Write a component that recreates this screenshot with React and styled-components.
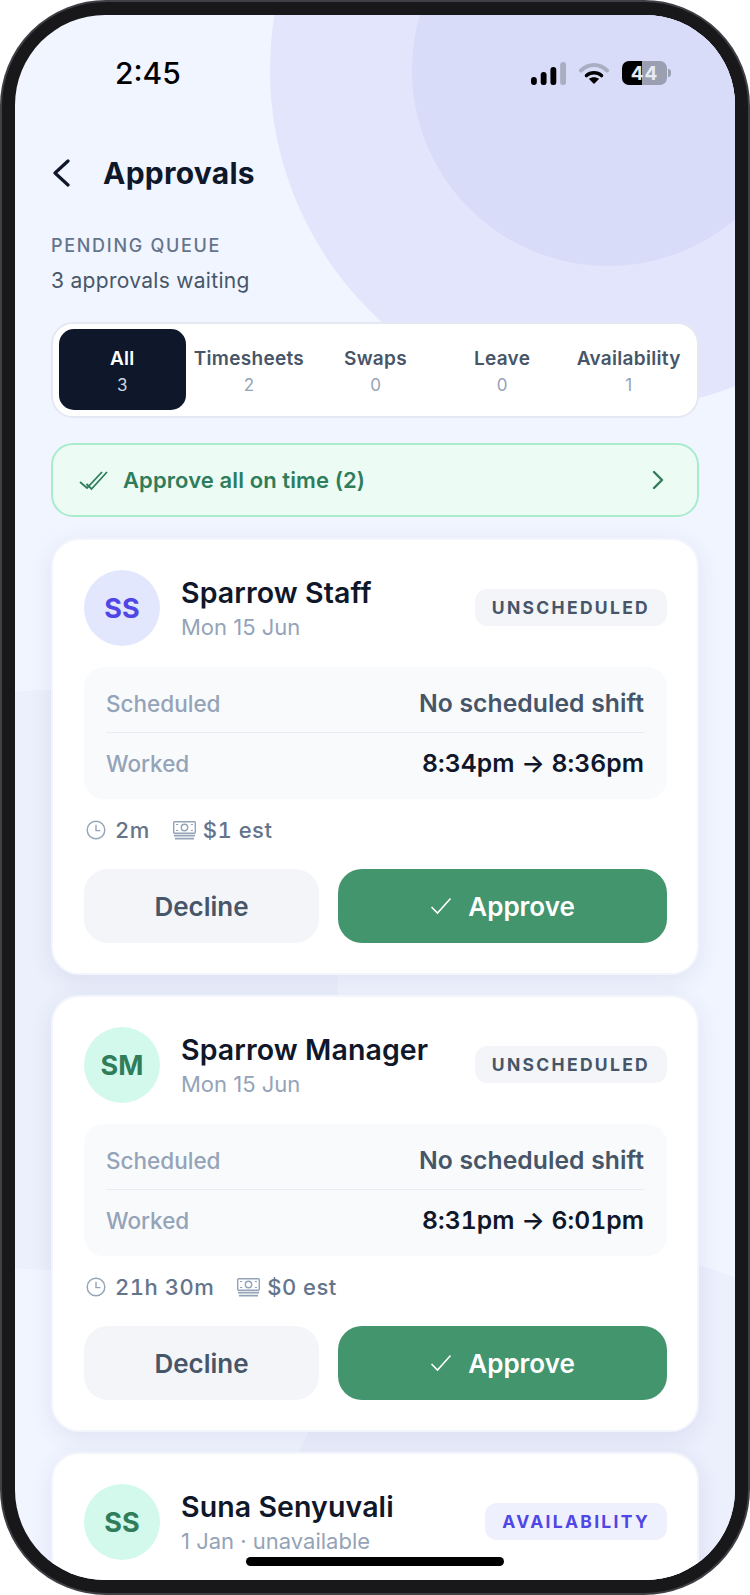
import React from "react";
import styled, { createGlobalStyle } from "styled-components";

const approvals = [
  {
    initials: "SS",
    tone: "indigo",
    name: "Sparrow Staff",
    date: "Mon 15 Jun",
    badge: "UNSCHEDULED",
    worked: "8:34pm → 8:36pm",
    duration: "2m",
    estimate: "$1 est",
  },
  {
    initials: "SM",
    tone: "green",
    name: "Sparrow Manager",
    date: "Mon 15 Jun",
    badge: "UNSCHEDULED",
    worked: "8:31pm → 6:01pm",
    duration: "21h 30m",
    estimate: "$0 est",
  },
];

const tabs = [
  { label: "All", count: 3 },
  { label: "Timesheets", count: 2 },
  { label: "Swaps", count: 0 },
  { label: "Leave", count: 0 },
  { label: "Availability", count: 1 },
];

const App = () => (
  <>
    <GlobalStyle />
    <Frame>
      <Screen>
        <OuterCircle />
        <InnerCircle />
        <LeftBlob />
        <RightBlob />
        <Content>
          <StatusBar>
            <Time>2:45</Time>
            <StatusIcons>
              <svg width="35" height="23" viewBox="0 0 36 23" preserveAspectRatio="none">
                <rect x="0" y="15" width="6" height="8" rx="3" fill="#000" />
                <rect x="10" y="10" width="6" height="13" rx="2.5" fill="#000" />
                <rect x="20" y="5" width="6" height="18" rx="2.5" fill="#000" />
                <rect x="30" y="0" width="6" height="23" rx="2.5" fill="#a9afc2" />
              </svg>
              <svg width="30" height="22" viewBox="0 0 30 22">
                <path d="M2 8.5C9.5 1.2 20.5 1.2 28 8.5" fill="none" stroke="#a9afc2" strokeWidth="4" strokeLinecap="round" />
                <path d="M7.5 13.5C11.8 9.8 18.2 9.8 22.5 13.5" fill="none" stroke="#000" strokeWidth="3.6" strokeLinecap="round" />
                <path d="M15 22L9.8 16.8C12.8 14.6 17.2 14.6 20.2 16.8Z" fill="#000" />
              </svg>
              <Battery>
                <BatteryBody>44</BatteryBody>
                <BatteryNub />
              </Battery>
            </StatusIcons>
          </StatusBar>

          <Header>
            <svg width="18" height="28" viewBox="0 0 18 28">
              <path d="M16 2L3 14L16 26" fill="none" stroke="#0f172a" strokeWidth="3.2" strokeLinecap="round" strokeLinejoin="round" />
            </svg>
            <Title>Approvals</Title>
          </Header>

          <Eyebrow>PENDING QUEUE</Eyebrow>
          <Waiting>3 approvals waiting</Waiting>

          <TabBar>
            {tabs.map((tab, i) => (
              <Tab key={tab.label} $active={i === 0}>
                <TabLabel $active={i === 0}>{tab.label}</TabLabel>
                <TabCount $active={i === 0}>{tab.count}</TabCount>
              </Tab>
            ))}
          </TabBar>

          <ApproveAll>
            <ApproveAllLeft>
              <svg width="30" height="21" viewBox="0 0 30 21">
                <path d="M2 12L9 18L24 2" fill="none" stroke="#2f7d5b" strokeWidth="1.8" />
                <path d="M8.5 14L13.5 19L29 2" fill="none" stroke="#2f7d5b" strokeWidth="1.8" />
              </svg>
              <ApproveAllText>Approve all on time (2)</ApproveAllText>
            </ApproveAllLeft>
            <svg width="14" height="20" viewBox="0 0 14 20">
              <path d="M3 2L11 10L3 18" fill="none" stroke="#2f7d5b" strokeWidth="2.4" strokeLinecap="round" strokeLinejoin="round" />
            </svg>
          </ApproveAll>

          <CardList>
            {approvals.map((item) => (
              <Card key={item.name}>
                <CardTop>
                  <Avatar $tone={item.tone}>{item.initials}</Avatar>
                  <Who>
                    <Name>{item.name}</Name>
                    <DateLine>{item.date}</DateLine>
                  </Who>
                  <Badge>{item.badge}</Badge>
                </CardTop>

                <InfoBox>
                  <InfoRow>
                    <InfoLabel>Scheduled</InfoLabel>
                    <InfoValue>No scheduled shift</InfoValue>
                  </InfoRow>
                  <InfoRow>
                    <InfoLabel>Worked</InfoLabel>
                    <InfoValue $strong>{item.worked}</InfoValue>
                  </InfoRow>
                </InfoBox>

                <Meta>
                  <MetaItem $gap={9}>
                    <svg width="20" height="20" viewBox="0 0 20 20">
                      <circle cx="10" cy="10" r="8.8" fill="none" stroke="#94a3b8" strokeWidth="1.4" />
                      <path d="M10 4.8V10.6H14.4" fill="none" stroke="#94a3b8" strokeWidth="1.4" />
                    </svg>
                    {item.duration}
                  </MetaItem>
                  <MetaItem $gap={7}>
                    <svg width="23" height="19" viewBox="0 0 23 19">
                      <rect x="0.7" y="0.7" width="21.6" height="11.6" rx="1" fill="none" stroke="#94a3b8" strokeWidth="1.4" />
                      <circle cx="11.5" cy="6.5" r="3.2" fill="none" stroke="#94a3b8" strokeWidth="1.4" />
                      <path d="M3 3.5H5.2M17.8 9.5H20M3 9.5H5.2M17.8 3.5H20" stroke="#94a3b8" strokeWidth="1.2" />
                      <path d="M1 14.6H22M2 17.6H21" stroke="#94a3b8" strokeWidth="1.6" />
                    </svg>
                    {item.estimate}
                  </MetaItem>
                </Meta>

                <Actions>
                  <DeclineButton>Decline</DeclineButton>
                  <ApproveButton>
                    <svg width="22" height="18" viewBox="0 0 22 18">
                      <path d="M1.5 10L7.5 16L20.5 1.5" fill="none" stroke="#fff" strokeWidth="1.6" />
                    </svg>
                    Approve
                  </ApproveButton>
                </Actions>
              </Card>
            ))}

            <Card>
              <CardTop>
                <Avatar $tone="green">SS</Avatar>
                <Who>
                  <Name>Suna Senyuvali</Name>
                  <DateLine>1 Jan · unavailable</DateLine>
                </Who>
                <Badge $accent>AVAILABILITY</Badge>
              </CardTop>
            </Card>
          </CardList>
        </Content>
        <HomeIndicator />
      </Screen>
    </Frame>
  </>
);

const GlobalStyle = createGlobalStyle`
  html, body {
    margin: 0;
    padding: 0;
    background: #fff;
  }
  body {
    font-family: "Inter", "Liberation Sans", sans-serif;
  }
  * {
    box-sizing: border-box;
  }
`;

const Frame = styled.div`
  width: 750px;
  height: 1595px;
  padding: 13px;
  background: #18181b;
  border: 2px solid #3f3f46;
  border-radius: 106px;
`;

const Screen = styled.div`
  position: relative;
  width: 720px;
  height: 1565px;
  overflow: hidden;
  background: #f1f5ff;
  border-radius: 90px;
`;

const OuterCircle = styled.div`
  position: absolute;
  left: 255px;
  top: -285px;
  width: 680px;
  height: 680px;
  border-radius: 50%;
  background: #e2e5fb;
`;

const InnerCircle = styled.div`
  position: absolute;
  left: 397px;
  top: -141px;
  width: 392px;
  height: 392px;
  border-radius: 50%;
  background: #d8dcf8;
`;

const LeftBlob = styled.div`
  position: absolute;
  left: -257px;
  top: 675px;
  width: 580px;
  height: 580px;
  border-radius: 50%;
  background: #ecf0fc;
`;

const RightBlob = styled.div`
  position: absolute;
  left: 253px;
  top: 1238px;
  width: 680px;
  height: 680px;
  border-radius: 50%;
  background: #eceffc;
`;

const Content = styled.div`
  position: relative;
  padding: 0 36px;
`;

const StatusBar = styled.div`
  display: flex;
  align-items: center;
  justify-content: space-between;
  height: 116px;
  margin-bottom: 18px;
  padding: 0 28px 0 64px;
`;

const Time = styled.span`
  font-size: 30px;
  font-weight: 500;
  color: #000;
  line-height: 1;
  margin-top: -1px;
`;

const StatusIcons = styled.div`
  display: flex;
  align-items: center;
  gap: 13px;
`;

const Battery = styled.div`
  display: flex;
  align-items: center;
  gap: 1px;
`;

const BatteryBody = styled.div`
  width: 45px;
  height: 24px;
  display: flex;
  align-items: center;
  justify-content: center;
  border-radius: 7px;
  background: linear-gradient(90deg, #000 0 20px, #9aa0b2 20px 100%);
  color: #e8eaf6;
  font-size: 19px;
  font-weight: 700;
  letter-spacing: 1px;
`;

const BatteryNub = styled.div`
  width: 3px;
  height: 8px;
  border-radius: 0 3px 3px 0;
  background: #9aa0b2;
`;

const Header = styled.div`
  display: flex;
  align-items: center;
  gap: 33px;
  height: 48px;
  margin-bottom: 38px;
  padding-left: 1px;
  color: #0f172a;
`;

const Title = styled.h1`
  margin: 0;
  font-size: 30px;
  font-weight: 700;
  color: #0f172a;
  letter-spacing: 0.25px;
`;

const Eyebrow = styled.div`
  font-size: 18px;
  line-height: 22px;
  font-weight: 500;
  letter-spacing: 1.7px;
  color: #64748b;
  margin-bottom: 10px;
`;

const Waiting = styled.div`
  font-size: 21px;
  line-height: 28px;
  letter-spacing: 0.3px;
  color: #475569;
  margin-bottom: 27px;
`;

const TabBar = styled.div`
  display: grid;
  grid-template-columns: repeat(5, 1fr);
  height: 96px;
  padding: 5px 5px 6px 6px;
  background: #fff;
  border: 2px solid #e4e8f3;
  border-radius: 22px;
`;

const Tab = styled.div`
  display: flex;
  flex-direction: column;
  align-items: center;
  justify-content: center;
  gap: 3px;
  padding-top: 3px;
  border-radius: 15px;
  background: ${(p) => (p.$active ? "#0f172a" : "transparent")};
`;

const TabLabel = styled.span`
  font-size: 19px;
  line-height: 24px;
  font-weight: 600;
  letter-spacing: 0.3px;
  white-space: nowrap;
  color: ${(p) => (p.$active ? "#fff" : "#475569")};
`;

const TabCount = styled.span`
  font-size: 17px;
  line-height: 22px;
  color: ${(p) => (p.$active ? "#cbd5e1" : "#94a3b8")};
`;

const ApproveAll = styled.div`
  display: flex;
  align-items: center;
  justify-content: space-between;
  height: 74px;
  margin-top: 25px;
  padding: 0 32px 0 25px;
  background: #edfbf5;
  border: 2px solid #a9eccb;
  border-radius: 22px;
`;

const ApproveAllLeft = styled.div`
  display: flex;
  align-items: center;
  gap: 15px;
`;

const ApproveAllText = styled.span`
  font-size: 22px;
  font-weight: 600;
  letter-spacing: 0.1px;
  color: #2f7d5b;
`;

const CardList = styled.div`
  display: flex;
  flex-direction: column;
  gap: 20px;
  margin-top: 21px;
`;

const Card = styled.div`
  padding: 30px 30px 30px 31px;
  background: #fff;
  border: 2px solid #f3f5fc;
  border-radius: 28px;
  box-shadow: 0 6px 24px rgba(30, 60, 120, 0.09);
`;

const CardTop = styled.div`
  display: flex;
  align-items: center;
`;

const Avatar = styled.div`
  flex: none;
  width: 76px;
  height: 76px;
  display: flex;
  align-items: center;
  justify-content: center;
  border-radius: 50%;
  font-size: 27px;
  font-weight: 700;
  background: ${(p) => (p.$tone === "green" ? "#d3f9ec" : "#e3e7fd")};
  color: ${(p) => (p.$tone === "green" ? "#2f7d5b" : "#4f46e5")};
`;

const Who = styled.div`
  flex: 1;
  margin-left: 21px;
  padding-top: 2px;
  min-width: 0;
`;

const Name = styled.div`
  font-size: 28.5px;
  line-height: 36px;
  font-weight: 600;
  letter-spacing: 0.1px;
  color: #0f172a;
  white-space: nowrap;
`;

const DateLine = styled.div`
  font-size: 22px;
  line-height: 33px;
  color: #94a3b8;
`;

const Badge = styled.span`
  flex: none;
  height: 37px;
  margin-top: -2px;
  display: flex;
  align-items: center;
  padding: 0 17px;
  border-radius: 12px;
  font-size: 17.5px;
  font-weight: 700;
  letter-spacing: 2.3px;
  background: ${(p) => (p.$accent ? "#eef0fe" : "#f3f5f9")};
  color: ${(p) => (p.$accent ? "#4f46e5" : "#475569")};
`;

const InfoBox = styled.div`
  margin-top: 21px;
  padding: 7px 23px 7px 22px;
  background: #f8fafc;
  border-radius: 20px;
`;

const InfoRow = styled.div`
  display: flex;
  align-items: center;
  justify-content: space-between;
  height: 58px;

  & + & {
    height: 60px;
    padding-top: 1px;
    border-top: 1px solid #e8edf5;
  }
`;

const InfoLabel = styled.span`
  font-size: 22.5px;
  font-weight: 500;
  color: #94a3b8;
`;

const InfoValue = styled.span`
  font-size: 24.7px;
  font-weight: 600;
  letter-spacing: 0.05px;
  font-variant-numeric: tabular-nums;
  color: ${(p) => (p.$strong ? "#0f172a" : "#475569")};
`;

const Meta = styled.div`
  display: flex;
  align-items: center;
  gap: 23px;
  height: 28px;
  margin-top: 17px;
  padding-left: 2px;
`;

const MetaItem = styled.div`
  display: flex;
  align-items: center;
  gap: ${(p) => p.$gap}px;
  font-size: 22px;
  font-weight: 500;
  letter-spacing: 0.5px;
  font-variant-numeric: tabular-nums;
  color: #64748b;
`;

const Actions = styled.div`
  display: flex;
  gap: 19px;
  margin-top: 25px;
`;

const DeclineButton = styled.button`
  flex: 1;
  height: 74px;
  border: 0;
  border-radius: 24px;
  background: #f3f5f9;
  color: #475569;
  font-family: inherit;
  font-size: 26px;
  font-weight: 600;
`;

const ApproveButton = styled.button`
  flex: 1.42;
  height: 74px;
  display: flex;
  align-items: center;
  justify-content: center;
  gap: 16px;
  border: 0;
  border-radius: 24px;
  background: #43956d;
  color: #fff;
  font-family: inherit;
  font-size: 26px;
  font-weight: 600;
`;

const HomeIndicator = styled.div`
  position: absolute;
  left: 231px;
  top: 1542px;
  width: 258px;
  height: 9px;
  border-radius: 5px;
  background: #000;
`;

export default App;
